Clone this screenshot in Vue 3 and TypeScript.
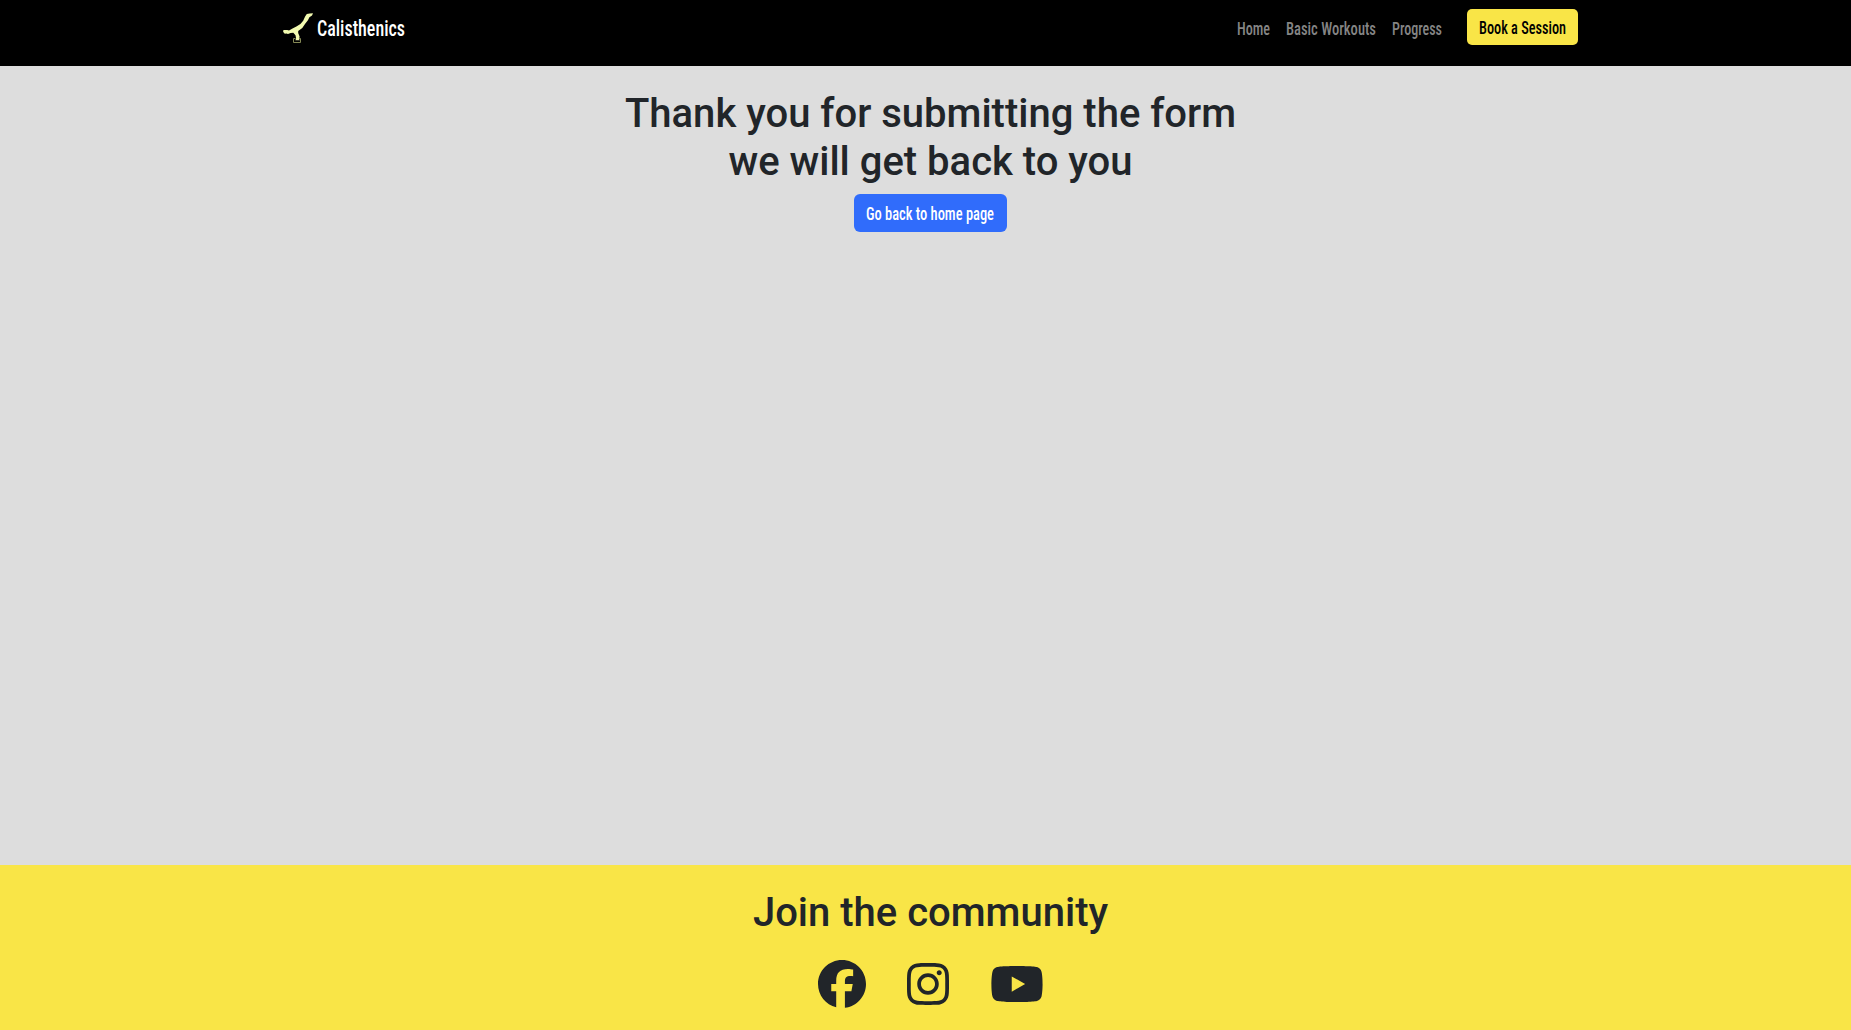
<script setup lang="ts">
interface Label {
  text: string
  width: number
}

interface Social {
  name: string
  width: number
  box: number
  path: string
}

// Horizontal squeeze applied to the narrow label lettering
const squeeze = 0.82
const narrow = `scale(${squeeze} 1)`

const links: Label[] = [
  { text: 'Home', width: 33 },
  { text: 'Basic Workouts', width: 90 },
  { text: 'Progress', width: 50 },
]

const socials: Social[] = [
  {
    name: 'Facebook',
    width: 48,
    box: 512,
    path: 'M512 256C512 114.6 397.4 0 256 0S0 114.6 0 256C0 376 82.7 476.8 194.2 504.5V334.2H141.4V256h52.8V222.3c0-87.1 39.4-127.5 125-127.5c16.2 0 44.2 3.2 55.7 6.4V172c-6-.6-16.5-1-29.6-1c-42 0-58.2 15.9-58.2 57.2V256h83.6l-14.4 78.2H287V510.1C413.8 494.8 512 386.9 512 256z',
  },
  {
    name: 'Instagram',
    width: 42,
    box: 448,
    path: 'M224.1 141c-63.6 0-114.9 51.3-114.9 114.9s51.3 114.9 114.9 114.9S339 319.5 339 255.9 287.7 141 224.1 141zm0 189.6c-41.1 0-74.7-33.5-74.7-74.7s33.5-74.7 74.7-74.7 74.7 33.5 74.7 74.7-33.6 74.7-74.7 74.7zm146.4-194.3c0 14.9-12 26.8-26.8 26.8-14.9 0-26.8-12-26.8-26.8s12-26.8 26.8-26.8 26.8 12 26.8 26.8zm76.1 27.2c-1.7-35.9-9.9-67.7-36.2-93.9-26.2-26.2-58-34.4-93.9-36.2-37-2.1-147.9-2.1-184.9 0-35.8 1.7-67.6 9.9-93.9 36.1s-34.4 58-36.2 93.9c-2.1 37-2.1 147.9 0 184.9 1.7 35.9 9.9 67.7 36.2 93.9s58 34.4 93.9 36.2c37 2.1 147.9 2.1 184.9 0 35.9-1.7 67.7-9.9 93.9-36.2 26.2-26.2 34.4-58 36.2-93.9 2.1-37 2.1-147.8 0-184.8zM398.8 388c-7.8 19.6-22.9 34.7-42.6 42.6-29.5 11.7-99.5 9-132.1 9s-102.7 2.6-132.1-9c-19.6-7.8-34.7-22.9-42.6-42.6-11.7-29.5-9-99.5-9-132.1s-2.6-102.7 9-132.1c7.8-19.6 22.9-34.7 42.6-42.6 29.5-11.7 99.5-9 132.1-9s102.7-2.6 132.1 9c19.6 7.8 34.7 22.9 42.6 42.6 11.7 29.5 9 99.5 9 132.1s2.7 102.7-9 132.1z',
  },
  {
    name: 'YouTube',
    width: 54,
    box: 576,
    path: 'M549.655 124.083c-6.281-23.65-24.787-42.276-48.284-48.597C458.781 64 288 64 288 64S117.22 64 74.629 75.486c-23.497 6.322-42.003 24.947-48.284 48.597-11.412 42.867-11.412 132.305-11.412 132.305s0 89.438 11.412 132.305c6.281 23.65 24.787 41.5 48.284 47.821C117.22 448 288 448 288 448s170.78 0 213.371-11.486c23.497-6.321 42.003-24.171 48.284-47.821 11.412-42.867 11.412-132.305 11.412-132.305s0-89.438-11.412-132.305zm-317.679 213.508V175.185l142.739 81.205-142.739 81.201z',
  },
]
</script>

<template>
  <div class="page">
    <header class="navbar">
      <div class="container">
        <a class="brand">
          <svg class="logo" width="30" height="30" viewBox="0 0 30 30" aria-hidden="true">
            <path
              fill="#f2fab0"
              d="M30 0.3 L29 2.5 L26.4 4.3 L24.9 7.2 L22 11 L19.3 15 L15.2 18.1 L15.2 20 L16.6 23.5 L16.1 26.4 L17 27.3 L12.4 27.3 L13.1 25.5 L12.5 22.3 L10.3 19.8 L7.6 20 L5 20.9 L3.4 20.5 L1.8 20.8 L0.6 19.4 L0 18 L0.7 17 L4.2 17 L6 17.5 L9.5 15.5 L13.4 13.6 L17.4 11 L20.2 7.8 L22.1 3.6 L23.8 1.1 L26.7 0.5 Z"
            />
            <path fill="none" stroke="#858955" d="M12.5 25.5H10.5V29.5H17.5V25.5H16" />
          </svg>
          <svg class="label label-brand" width="88" height="34">
            <text x="0" y="25" :transform="narrow" :textLength="88 / squeeze" lengthAdjust="spacingAndGlyphs">Calisthenics</text>
          </svg>
        </a>
        <nav class="menu">
          <a v-for="link in links" :key="link.text" class="link">
            <svg class="label" :width="link.width" height="26">
              <text x="0" y="20" :transform="narrow" :textLength="link.width / squeeze" lengthAdjust="spacingAndGlyphs">{{ link.text }}</text>
            </svg>
          </a>
          <a class="button book">
            <svg class="label" width="87" height="26">
              <text x="0" y="20" :transform="narrow" :textLength="87 / squeeze" lengthAdjust="spacingAndGlyphs">Book a Session</text>
            </svg>
          </a>
        </nav>
      </div>
    </header>

    <main class="content">
      <h1>Thank you for submitting the form<br />we will get back to you</h1>
      <a class="button home">
        <svg class="label" width="128" height="26">
          <text x="0" y="20" :transform="narrow" :textLength="128 / squeeze" lengthAdjust="spacingAndGlyphs">Go back to home page</text>
        </svg>
      </a>
    </main>

    <footer class="community">
      <h1>Join the community</h1>
      <div class="socials">
        <a v-for="s in socials" :key="s.name" :aria-label="s.name">
          <svg :width="s.width" height="48" :viewBox="`0 0 ${s.box} 512`">
            <path fill="currentColor" :d="s.path" />
          </svg>
        </a>
      </div>
    </footer>
  </div>
</template>

<style>
body {
  margin: 0;
}
</style>

<style scoped>
.page {
  box-sizing: border-box;
  height: 1030px;
  display: flex;
  flex-direction: column;
  overflow: hidden;
  background: #ddd;
  color: #212529;
  font-family: Roboto, sans-serif;
}
svg {
  display: block;
}
.navbar {
  box-sizing: border-box;
  flex: none;
  height: 66px;
  padding: 9px 0 0 10px;
  background: #000;
}
.container {
  width: 1295px;
  margin: 0 auto;
  display: flex;
  justify-content: space-between;
  align-items: flex-start;
}
.brand {
  display: flex;
  align-items: flex-start;
  gap: 4px;
  color: #fff;
}
.logo {
  margin-top: 4px;
}
.label {
  overflow: visible;
  fill: currentColor;
  font-size: 18.2px;
  font-stretch: 75%;
  font-weight: 500;
}
.label-brand {
  margin-top: 2px;
  font-size: 22.3px;
}
.menu {
  display: flex;
  align-items: flex-start;
  gap: 16px;
  color: #858585;
}
.link {
  padding-top: 6px;
}
.button {
  box-sizing: border-box;
  display: flex;
  justify-content: center;
  border-radius: 6px;
}
.book {
  width: 111px;
  height: 36px;
  margin-left: 9px;
  padding-top: 5px;
  border-radius: 5px;
  background: #f9e547;
  color: #000;
}
.content {
  flex: none;
  height: 799px;
  box-sizing: border-box;
  padding: 24px 0 0 10px;
  display: flex;
  flex-direction: column;
  align-items: center;
}
h1 {
  margin: 0 0 8px;
  font-size: 40px;
  line-height: 48px;
  font-weight: 500;
  text-align: center;
}
.home {
  width: 153px;
  height: 38px;
  padding: 6px 1px 0 0;
  background: #306cfb;
  color: #fff;
}
.community {
  flex: 1;
  padding: 24px 0 0 10px;
  background: #f9e547;
}
.socials {
  display: flex;
  justify-content: center;
  gap: 41px;
  margin-top: 23px;
}
</style>
